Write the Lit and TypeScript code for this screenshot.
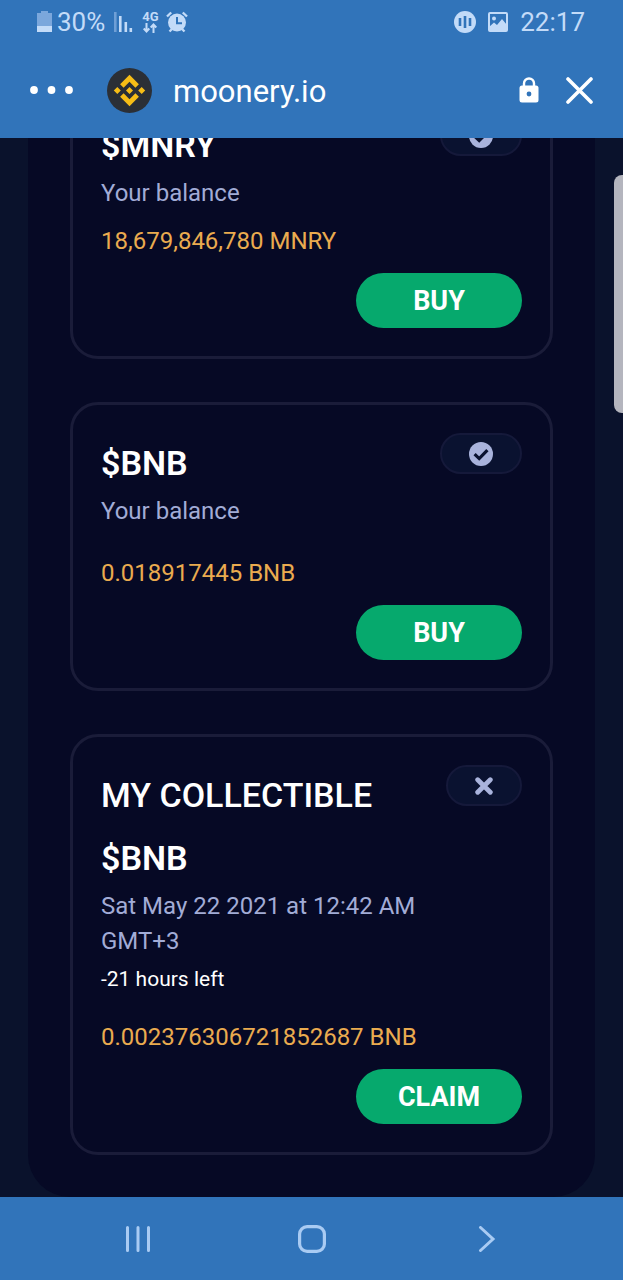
import { LitElement, html, css, svg, nothing } from "lit";
import { customElement, property } from "lit/decorators.js";

interface Asset {
  titles: string[];
  note: string;
  remaining?: string;
  amount: string;
  compact?: boolean;
  enabled: boolean;
  action: string;
}

const ASSETS: Asset[] = [
  { titles: ["$MNRY"], note: "Your balance", amount: "18,679,846,780 MNRY", compact: true, enabled: true, action: "BUY" },
  { titles: ["$BNB"], note: "Your balance", amount: "0.018917445 BNB", enabled: true, action: "BUY" },
  {
    titles: ["MY COLLECTIBLE", "$BNB"],
    note: "Sat May 22 2021 at 12:42 AM GMT+3",
    remaining: "-21 hours left",
    amount: "0.002376306721852687 BNB",
    enabled: false,
    action: "CLAIM",
  },
];

const checkIcon = svg`<svg width="24" height="24" viewBox="0 0 24 24" aria-hidden="true">
  <circle cx="12" cy="12" r="12" fill="#a9b3dc"/>
  <path d="M5.600 12.200l4.600 4.400 8.200-8.400" fill="none" stroke="#0a1230" stroke-width="3.200"/>
</svg>`;

const crossIcon = svg`<svg width="18" height="18" viewBox="0 0 18 18" aria-hidden="true">
  <path d="M2.700 2.700l12.600 12.600M15.300 2.700L2.700 15.300" fill="none" stroke="#a9b3dc" stroke-width="4.800" stroke-linecap="round"/>
</svg>`;

@customElement("asset-card")
export class AssetCard extends LitElement {
  @property({ attribute: false }) asset!: Asset;

  static styles = css`
    :host {
      display: flex;
      flex-direction: column;
      flex: none;
      box-sizing: border-box;
      padding: 28px;
      border: 3px solid #1a1c39;
      border-radius: 28px;
    }
    .top {
      display: flex;
      align-items: flex-start;
    }
    .info {
      flex: 1;
      min-width: 0;
      padding-top: 9px;
    }
    .title {
      margin: 0 0 21px;
      font-size: 34px;
      font-weight: 500;
      line-height: 42px;
      color: #fff;
    }
    .title.last {
      margin-bottom: 10px;
    }
    .token {
      font-weight: 600;
    }
    .note,
    .amount {
      margin: 0;
      font-size: 24px;
      line-height: 35px;
      color: #a2acd6;
    }
    .remaining {
      margin: 6px 0 0;
      font-size: 21px;
      line-height: 28px;
      color: #fff;
    }
    .amount {
      margin-top: 27px;
      color: #eaab4f;
    }
    .amount.compact {
      margin-top: 13px;
    }
    .chip {
      display: flex;
      align-items: center;
      justify-content: center;
      box-sizing: border-box;
      height: 41px;
      padding: 0 27px;
      border: 2px solid #15193a;
      border-radius: 21px;
      background: #0a1230;
    }
    .action {
      align-self: flex-end;
      margin-top: 14px;
      width: 166px;
      height: 55px;
      padding: 1px 0 0;
      border: 0;
      border-radius: 28px;
      background: #06a96d;
      color: #fff;
      font: 700 27px/55px Roboto, sans-serif;
      cursor: pointer;
    }
  `;

  render() {
    const a = this.asset;
    const last = a.titles.length - 1;
    return html`
      <div class="top">
        <div class="info">
          ${a.titles.map(
            (t, i) => html`<h2 class="title ${i === last ? "last" : ""} ${t.startsWith("$") ? "token" : ""}">${t}</h2>`
          )}
          <p class="note">${a.note}</p>
          ${a.remaining ? html`<p class="remaining">${a.remaining}</p>` : nothing}
        </div>
        <span class="chip">${a.enabled ? checkIcon : crossIcon}</span>
      </div>
      <p class="amount ${a.compact ? "compact" : ""}">${a.amount}</p>
      <button class="action" type="button">${a.action}</button>
    `;
  }
}

@customElement("app-root")
export class AppRoot extends LitElement {
  static styles = css`
    :host {
      display: flex;
      flex-direction: column;
      height: 100vh;
      overflow: hidden;
      font-family: Roboto, sans-serif;
      background: #0a122c;
    }
    svg {
      display: block;
      flex: none;
    }
    .status {
      display: flex;
      flex: none;
      align-items: center;
      height: 44px;
      padding: 0 38px 0 37px;
      background: #3174ba;
      color: #c3dbf8;
      font-size: 26px;
    }
    .status .battery {
      margin: 0 5px 0 0;
    }
    .status .signal {
      margin-left: 9px;
    }
    .network {
      display: flex;
      flex-direction: column;
      align-items: center;
      margin: 0 7px 0 9px;
      font-size: 13px;
      font-weight: 700;
      line-height: 12px;
    }
    .right {
      display: flex;
      align-items: center;
      gap: 12px;
      margin-left: auto;
    }
    .browser {
      display: flex;
      flex: none;
      align-items: center;
      box-sizing: border-box;
      height: 94px;
      padding: 0 30px 2px 29px;
      background: #3174ba;
      color: #fff;
    }
    .bare {
      display: flex;
      padding: 0;
      border: 0;
      background: none;
      cursor: pointer;
    }
    .logo {
      margin: 0 21px 0 33px;
    }
    .site {
      flex: 1;
      padding-top: 3px;
      font-size: 31px;
      line-height: 40px;
    }
    .close {
      margin-left: 27px;
    }
    .page {
      position: relative;
      display: flex;
      flex: 1;
      flex-direction: column;
      justify-content: flex-end;
      min-height: 0;
      overflow: hidden;
      padding: 0 28px;
    }
    .panel {
      display: flex;
      flex: none;
      flex-direction: column;
      gap: 43px;
      padding: 42px;
      border-radius: 42px;
      background: #060925;
    }
    .thumb {
      position: absolute;
      top: 37px;
      right: 0;
      width: 9px;
      height: 238px;
      border-radius: 8px 0 0 8px;
      background: #b4b5be;
    }
    .nav {
      display: flex;
      flex: none;
      align-items: center;
      justify-content: space-around;
      height: 83px;
      padding: 0 49px 0 51px;
      background: #3174ba;
    }
  `;

  render() {
    return html`
      <div class="status">
        <svg class="battery" width="15" height="22" viewBox="0 0 15 22">
          <path d="M4 0h7v2h4v13H0V2h4z" fill="#7ba7dc" />
          <path d="M0 15h15v6H0z" fill="#c3dbf8" />
        </svg>
        <span>30%</span>
        <svg class="signal" width="19" height="20" viewBox="0 0 19 20">
          <path d="M0 0h2.600v20H0z" fill="#6f9fd6" />
          <path d="M5 4h2.600v16H5zM10.500 10h2.600v10h-2.600zM15.500 16h2.600v4h-2.600z" fill="#c3dbf8" />
        </svg>
        <span class="network">
          <span>4G</span>
          <svg width="14" height="10" viewBox="0 0 14 10" fill="none" stroke="#c3dbf8" stroke-width="2">
            <path d="M3.500 0v8M.7 5.500l2.800 3 2.800-3M10.500 10V2M7.700 4.500l2.800-3 2.800 3" />
          </svg>
        </span>
        <svg width="22" height="22" viewBox="0 0 22 22">
          <circle cx="11" cy="11.500" r="9" fill="#c3dbf8" />
          <path d="M1 5.500L5.200 1.500M21 5.500L16.800 1.500M3.500 20.500l3-3M18.500 20.500l-3-3" stroke="#c3dbf8" stroke-width="2.400" />
          <path d="M11 6v6.300h5" fill="none" stroke="#3174ba" stroke-width="2" />
        </svg>
        <div class="right">
          <svg width="22" height="22" viewBox="0 0 22 22">
            <circle cx="11" cy="11" r="11" fill="#c3dbf8" />
            <path d="M6 7v8M11 5v12M16 7v8" stroke="#3174ba" stroke-width="2.600" />
          </svg>
          <svg width="20" height="20" viewBox="0 0 20 20">
            <rect x="1" y="1" width="18" height="18" rx="1" fill="none" stroke="#c3dbf8" stroke-width="2" />
            <circle cx="6" cy="6.500" r="2" fill="#c3dbf8" />
            <path d="M1 15l5-4.500 3 2.500 5-6 5 6v6H1z" fill="#c3dbf8" />
          </svg>
          <time>22:17</time>
        </div>
      </div>

      <header class="browser">
        <button class="bare" type="button" aria-label="More">
          <svg width="45" height="8" viewBox="0 0 45 8" fill="#fff">
            <circle cx="5" cy="4" r="3.900" />
            <circle cx="22.500" cy="4" r="3.900" />
            <circle cx="40" cy="4" r="3.900" />
          </svg>
        </button>
        <svg class="logo" width="45" height="45" viewBox="0 0 45 45">
          <circle cx="22.500" cy="22.500" r="22.500" fill="#2b2f36" />
          <g fill="#f7bd16">
            <path d="M22.500 6.800l9.400 9.400-3.500 3.500-5.900-5.900-5.900 5.900-3.500-3.500z" />
            <path d="M22.500 38.200l9.400-9.400-3.500-3.500-5.900 5.900-5.900-5.900-3.500 3.500z" />
            <path d="M22.500 19l3.500 3.500-3.500 3.500-3.500-3.500zM10.300 19l3.500 3.500-3.500 3.500-3.500-3.500zM34.700 19l3.500 3.500-3.500 3.500-3.500-3.500z" />
          </g>
        </svg>
        <span class="site">moonery.io</span>
        <svg width="20" height="26" viewBox="0 0 20 26">
          <path d="M5 10V6.500a5 5 0 0 1 10 0V10" fill="none" stroke="#fff" stroke-width="2.400" />
          <rect x="0.500" y="8.500" width="19" height="17" rx="2.500" fill="#fff" />
          <circle cx="10" cy="17" r="2.400" fill="#3174ba" />
        </svg>
        <button class="bare close" type="button" aria-label="Close">
          <svg width="27" height="27" viewBox="0 0 27 27">
            <path d="M2 2l23 23M25 2L2 25" stroke="#fff" stroke-width="3.600" stroke-linecap="round" />
          </svg>
        </button>
      </header>

      <main class="page">
        <section class="panel">
          ${ASSETS.map((asset) => html`<asset-card .asset=${asset}></asset-card>`)}
        </section>
        <div class="thumb"></div>
      </main>

      <nav class="nav">
        <button class="bare" type="button" aria-label="Recents">
          <svg width="26" height="26" viewBox="0 0 26 26" stroke="#a9cbf3" stroke-width="3" stroke-linecap="round">
            <path d="M2.500 1.500v23M13 1.500v23M23.500 1.500v23" />
          </svg>
        </button>
        <button class="bare" type="button" aria-label="Home">
          <svg width="28" height="28" viewBox="0 0 28 28">
            <rect x="1.600" y="1.600" width="24.800" height="24.800" rx="7.500" fill="none" stroke="#a9cbf3" stroke-width="3.200" />
          </svg>
        </button>
        <button class="bare" type="button" aria-label="Back">
          <svg width="26" height="26" viewBox="0 0 26 26">
            <path d="M6.500 1.500L19 13 6.500 24.500" fill="none" stroke="#a9cbf3" stroke-width="3" stroke-linecap="round" />
          </svg>
        </button>
      </nav>
    `;
  }
}
